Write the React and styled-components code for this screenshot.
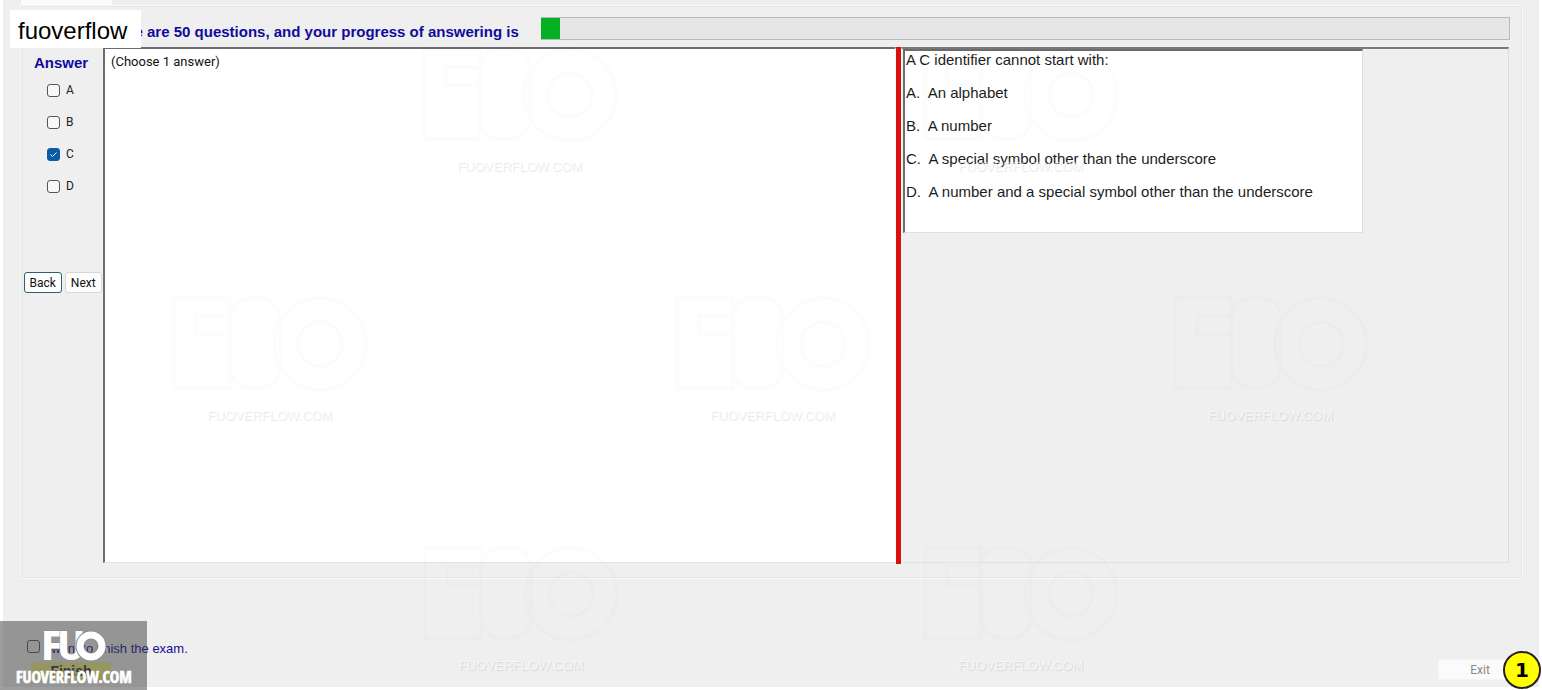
import React, { useState } from "react";
import styled, { createGlobalStyle } from "styled-components";

const sans = `"Liberation Sans", Arial, sans-serif`;
const ui = `Roboto, "Liberation Sans", sans-serif`;

const GlobalStyle = createGlobalStyle`
  *, *::before, *::after { box-sizing: border-box; }
  body { margin: 0; background: #fff; color: #111; font-family: ${sans}; }
`;

const Page = styled.div`
  position: relative;
  display: flex;
  min-height: 100vh;
  padding: 0 3px 3px;
  overflow: hidden;
`;

const Window = styled.main`
  flex: 1;
  display: flex;
  flex-direction: column;
  padding: 0 17px 7px 18px;
  background: #efefef;
`;

const TabStub = styled.div`
  width: 91px;
  height: 6px;
  background: #fbfbfb;
`;

const ExamGroup = styled.section`
  flex: 1;
  display: flex;
  flex-direction: column;
  padding: 0 12px 14px 0;
  border: 1px solid #e6e6e6;
  outline: 1px solid #f8f8f8;
`;

const ProgressRow = styled.header`
  display: flex;
  align-items: center;
  gap: 22px;
  height: 40px;
  padding: 2px 0 0 80px;
`;

const Heading = styled.h1`
  margin: 0;
  padding-top: 8px;
  color: #0f0b9c;
  font: bold 15px/18px ${sans};
  white-space: nowrap;
`;

const Progress = styled.progress`
  flex: 1;
  height: 23px;
  margin-right: -1px;
  appearance: none;
  border: 1px solid #b9b9b9;
  border-left: 0;
  background: #e6e6e6;
  &::-webkit-progress-bar { background: #e6e6e6; }
  &::-webkit-progress-value { background: #06b025; }
`;

const Columns = styled.div`
  flex: 1;
  display: flex;
`;

const AnswerColumn = styled.aside`
  display: flex;
  flex-direction: column;
  flex: 0 0 81px;
  padding-top: 7px;
`;

const AnswerTitle = styled.h2`
  margin: 0 0 2px;
  padding-left: 12px;
  color: #0f0b9c;
  font: bold 15px/18px ${sans};
`;

const AnswerList = styled.fieldset`
  height: 198px;
  margin: 0;
  padding: 0 0 0 25px;
  border: 0;
`;

const Option = styled.label`
  display: flex;
  align-items: center;
  gap: 6px;
  height: 32px;
  color: #222;
  font: 12px/16px ${ui};
`;

const FinishOption = styled(Option)`
  gap: 4px;
  color: #160c94;
  font: 13px/16px ${sans};
`;

const FinishText = styled.span`
  padding-top: 5px;
`;

const Tick = styled.input`
  flex: none;
  appearance: none;
  width: 13px;
  height: 13px;
  margin: 0;
  border: 1px solid #555;
  border-radius: 3px;
  background: ${(p) => (p.$clear ? "transparent" : "#f7f7f7")};
  &:checked {
    border-color: #0a5ca8;
    background: #0a5ca8 url("data:image/svg+xml,%3Csvg xmlns='http://www.w3.org/2000/svg' viewBox='0 0 11 11'%3E%3Cpath d='M2.5 5.5 4.5 7.5 8.5 3.5' fill='none' stroke='white'/%3E%3C/svg%3E");
  }
`;

const NavButtons = styled.div`
  display: flex;
  gap: 3px;
  padding: 0 1px 0 2px;
`;

const NavButton = styled.button`
  flex: 1;
  height: 21px;
  padding: 0;
  border: 1px solid ${(p) => (p.$active ? "#2f6070" : "#d6d6d6")};
  border-radius: 3px;
  background: #fdfdfd;
  color: #111;
  font: 12px/16px ${ui};
`;

const AnswerPane = styled.section`
  flex: 778 1 0;
  padding: 5px 6px;
  border: solid;
  border-width: 2px 1px 1px 2px;
  border-color: #6d6d6d #f8f8f8 #e2e2e2 #6d6d6d;
  background: #fff;
  font: 13px/16px ${ui};
`;

const Splitter = styled.div`
  flex: none;
  width: 5px;
  margin-bottom: -1px;
  background: #d81010;
`;

const QuestionPane = styled.section`
  flex: 605 1 0;
  padding-left: 1px;
  border: solid;
  border-width: 2px 1px 1px;
  border-color: #7a7a7a #dcdcdc #e2e2e2 #f4f4f4;
`;

const QuestionCard = styled.div`
  width: 76%;
  height: 184px;
  border: solid;
  border-width: 2px 1px 1px 2px;
  border-color: #6d6d6d #dedede #dedede #6d6d6d;
  padding-left: 1px;
  background: #fff;
  color: #1c1c1c;
  font: 15px/17px ${sans};
  white-space: pre;
`;

const Line = styled.p`
  margin: 0 0 16px;
`;

const Footer = styled.footer`
  display: flex;
  justify-content: space-between;
  align-items: flex-end;
  height: 102px;
`;

const FinishArea = styled.div`
  display: flex;
  flex-direction: column;
  align-items: flex-start;
  padding-left: 6px;
`;

const FinishButton = styled.button`
  width: 80px;
  height: 18px;
  margin-left: 4px;
  padding: 0;
  border: 0;
  background: #f0f08c;
  color: #333;
  font: bold 14px/18px ${sans};
`;

const ExitButton = styled.button`
  width: 84px;
  height: 21px;
  padding: 0;
  border: 1px solid #f4f4f4;
  background: #fbfbfb;
  color: #888;
  font: 12px/16px ${ui};
`;

const NameTag = styled.div`
  position: absolute;
  left: 10px;
  top: 10px;
  width: 131px;
  height: 38px;
  padding-left: 8px;
  background: #fff;
  color: #000;
  font: 24px/42px ${sans};
`;

const LogoPlate = styled.div`
  position: absolute;
  left: 0;
  bottom: 0;
  width: 147px;
  height: 69px;
  background: rgba(60, 60, 60, 0.5);
`;

const LogoDrawing = styled.svg`
  display: block;
`;

const Badge = styled.div`
  position: absolute;
  right: 1px;
  bottom: 1px;
  width: 38px;
  height: 38px;
  border: 2px solid #222;
  border-radius: 50%;
  background: #ff0;
  color: #000;
  font: bold 20px/34px "DejaVu Sans", sans-serif;
  text-align: center;
`;

const Watermark = styled.div`
  position: absolute;
  left: ${(p) => p.$x}%;
  top: ${(p) => p.$y}px;
  width: 200px;
  margin-left: -100px;
  color: rgba(255, 255, 255, 0.6);
  font: 13px/16px ${sans};
  text-align: center;
  text-shadow: 1px 1px 1px rgba(0, 0, 0, 0.1);
  pointer-events: none;
`;

const GhostMark = styled.svg`
  display: block;
  width: 200px;
  height: 100px;
  margin-bottom: 14px;
  opacity: 0.008;
`;

const marks = [
  [33.7, 45], [66.2, 45], [17.5, 294], [50.1, 294], [82.4, 294], [33.8, 544], [66.2, 544],
];

const question = [
  "A C identifier cannot start with:",
  "A.  An alphabet",
  "B.  A number",
  "C.  A special symbol other than the underscore",
  "D.  A number and a special symbol other than the underscore",
];

const letter = {
  fontFamily: "Roboto, sans-serif",
  fontWeight: 900,
  fontSize: 40,
  fill: "#fff",
  stroke: "#8c8c8c",
  strokeWidth: 1,
  paintOrder: "stroke",
};

export default function App() {
  const [chosen, setChosen] = useState({ C: true });
  const [finish, setFinish] = useState(false);
  return (
    <Page>
      <GlobalStyle />
      <Window>
        <TabStub />
        <ExamGroup>
          <ProgressRow>
            <Heading id="progress-title">There are 50 questions, and your progress of answering is</Heading>
            <Progress value={1} max={50} aria-labelledby="progress-title" />
          </ProgressRow>
          <Columns>
            <AnswerColumn>
              <AnswerTitle>Answer</AnswerTitle>
              <AnswerList aria-label="Answer">
                {["A", "B", "C", "D"].map((k) => (
                  <Option key={k}>
                    <Tick
                      type="checkbox"
                      checked={!!chosen[k]}
                      onChange={() => setChosen({ ...chosen, [k]: !chosen[k] })}
                    />
                    {k}
                  </Option>
                ))}
              </AnswerList>
              <NavButtons>
                <NavButton $active>Back</NavButton>
                <NavButton>Next</NavButton>
              </NavButtons>
            </AnswerColumn>
            <AnswerPane>(Choose 1 answer)</AnswerPane>
            <Splitter />
            <QuestionPane>
              <QuestionCard>
                {question.map((t) => (
                  <Line key={t}>{t}</Line>
                ))}
              </QuestionCard>
            </QuestionPane>
          </Columns>
        </ExamGroup>
        <Footer>
          <FinishArea>
            <FinishOption>
              <Tick $clear type="checkbox" checked={finish} onChange={() => setFinish(!finish)} />
              <FinishText>I want to finish the exam.</FinishText>
            </FinishOption>
            <FinishButton>Finish</FinishButton>
          </FinishArea>
          <ExitButton disabled>Exit</ExitButton>
        </Footer>
      </Window>
      {marks.map(([x, y]) => (
        <Watermark key={`${x}-${y}`} $x={x} $y={y} aria-hidden="true">
          <GhostMark viewBox="0 0 200 100" fill="none" stroke="#000" strokeWidth="3">
            <rect x="4" y="4" width="56" height="90" />
            <rect x="26" y="22" width="34" height="18" />
            <rect x="60" y="4" width="50" height="90" rx="20" />
            <circle cx="150" cy="50" r="46" />
            <circle cx="150" cy="50" r="22" />
          </GhostMark>
          FUOVERFLOW.COM
        </Watermark>
      ))}
      <NameTag>fuoverflow</NameTag>
      <LogoPlate>
        <LogoDrawing width="147" height="69" viewBox="0 0 147 69" role="img" aria-label="FUO">
          <text x="42" y="39" {...letter}>F</text>
          <text x="58" y="39" {...letter}>U</text>
          <circle cx="91" cy="25" r="11" fill="none" stroke="#8c8c8c" strokeWidth="9" />
          <circle cx="91" cy="25" r="11" fill="none" stroke="#fff" strokeWidth="7" />
          <text
            x="16"
            y="62"
            fill="#fff"
            stroke="#fff"
            strokeWidth="0.6"
            fontFamily="Liberation Sans Narrow, Open Sans Condensed, DejaVu Sans Condensed, sans-serif"
            fontWeight="bold"
            fontSize="16"
          >
            FUOVERFLOW.COM
          </text>
        </LogoDrawing>
      </LogoPlate>
      <Badge>1</Badge>
    </Page>
  );
}
